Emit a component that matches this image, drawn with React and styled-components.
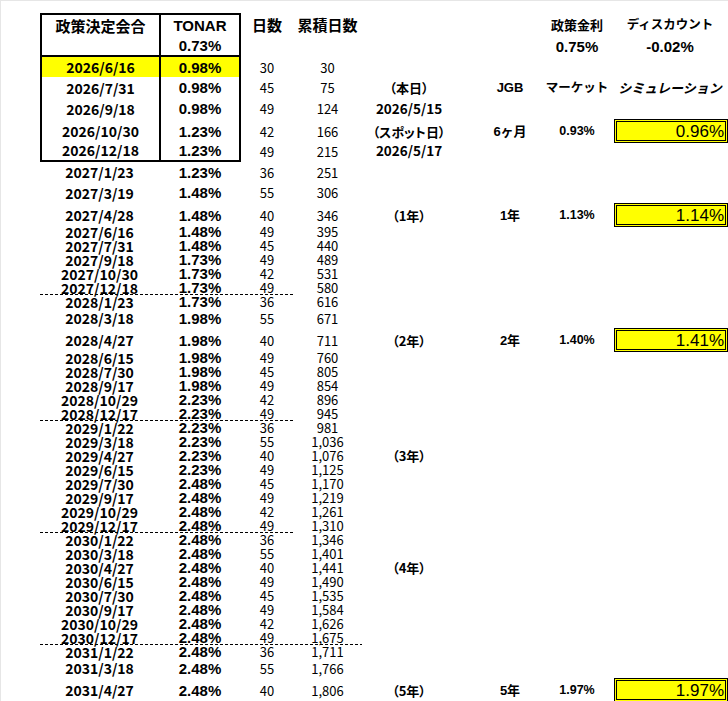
import React from "react";
import styled, { createGlobalStyle } from "styled-components";

const JP = `"Noto Sans CJK JP", "Noto Sans", sans-serif`;
const ARIAL = `"Liberation Sans", "Noto Sans CJK JP", Arial, sans-serif`;

// date, TONAR, days, cumulative, row height
const rows = [
  ["2026/6/16", "0.98%", "30", "30", 20],
  ["2026/7/31", "0.98%", "45", "75", 21],
  ["2026/9/18", "0.98%", "49", "124", 21],
  ["2026/10/30", "1.23%", "42", "166", 21],
  ["2026/12/18", "1.23%", "49", "215", 22],
  ["2027/1/23", "1.23%", "36", "251", 20],
  ["2027/3/19", "1.48%", "55", "306", 21],
  ["2027/4/28", "1.48%", "40", "346", 21],
  ["2027/6/16", "1.48%", "49", "395"],
  ["2027/7/31", "1.48%", "45", "440"],
  ["2027/9/18", "1.73%", "49", "489"],
  ["2027/10/30", "1.73%", "42", "531"],
  ["2027/12/18", "1.73%", "49", "580"],
  ["2028/1/23", "1.73%", "36", "616"],
  ["2028/3/18", "1.98%", "55", "671", 20],
  ["2028/4/27", "1.98%", "40", "711", 22],
  ["2028/6/15", "1.98%", "49", "760"],
  ["2028/7/30", "1.98%", "45", "805"],
  ["2028/9/17", "1.98%", "49", "854"],
  ["2028/10/29", "2.23%", "42", "896"],
  ["2028/12/17", "2.23%", "49", "945"],
  ["2029/1/22", "2.23%", "36", "981"],
  ["2029/3/18", "2.23%", "55", "1,036"],
  ["2029/4/27", "2.23%", "40", "1,076"],
  ["2029/6/15", "2.23%", "49", "1,125"],
  ["2029/7/30", "2.48%", "45", "1,170"],
  ["2029/9/17", "2.48%", "49", "1,219"],
  ["2029/10/29", "2.48%", "42", "1,261"],
  ["2029/12/17", "2.48%", "49", "1,310"],
  ["2030/1/22", "2.48%", "36", "1,346"],
  ["2030/3/18", "2.48%", "55", "1,401"],
  ["2030/4/27", "2.48%", "40", "1,441"],
  ["2030/6/15", "2.48%", "49", "1,490"],
  ["2030/7/30", "2.48%", "45", "1,535"],
  ["2030/9/17", "2.48%", "49", "1,584"],
  ["2030/10/29", "2.48%", "42", "1,626"],
  ["2030/12/17", "2.48%", "49", "1,675"],
  ["2031/1/22", "2.48%", "36", "1,711"],
  ["2031/3/18", "2.48%", "55", "1,766", 20],
  ["2031/4/27", "2.48%", "40", "1,806", 22],
];

// dashed separators (width of the line in px)
const dashes = {
  "2028/1/23": 253,
  "2029/1/22": 253,
  "2030/1/22": 253,
  "2031/1/22": 322,
};

const side = {
  "2026/7/31": { note: "（本日）", term: "JGB", market: "マーケット", sim: "シミュレーション" },
  "2026/9/18": { date: "2026/5/15" },
  "2026/10/30": { note: "（スポット日）", term: "6ヶ月", rate: "0.93%", box: "0.96%" },
  "2026/12/18": { date: "2026/5/17" },
  "2027/4/28": { note: "（1年）", term: "1年", rate: "1.13%", box: "1.14%" },
  "2028/4/27": { note: "（2年）", term: "2年", rate: "1.40%", box: "1.41%" },
  "2029/4/27": { note: "（3年）" },
  "2030/4/27": { note: "（4年）" },
  "2031/4/27": { note: "（5年）", term: "5年", rate: "1.97%", box: "1.97%" },
};

const BOXED = 5;

export default function App() {
  return (
    <>
      <GlobalStyle />
      <Page>
        <Row $h={22}>
          <Cell $left $top>
            <Head>政策決定会合</Head>
          </Cell>
          <Cell $left $right $top>
            <Rate>TONAR</Rate>
          </Cell>
          <Cell>
            <Head>日数</Head>
          </Cell>
          <Cell>
            <Head>累積日数</Head>
          </Cell>
          <Cell />
          <Cell />
          <Cell>
            <SmallHead>政策金利</SmallHead>
          </Cell>
          <Cell>
            <SmallHead $narrow>ディスカウント</SmallHead>
          </Cell>
        </Row>
        <Row $h={22}>
          <Cell $left $bottom />
          <Cell $left $right $bottom>
            <Rate>0.73%</Rate>
          </Cell>
          <Cell />
          <Cell />
          <Cell />
          <Cell />
          <Cell>
            <Rate>0.75%</Rate>
          </Cell>
          <Cell>
            <Rate>-0.02%</Rate>
          </Cell>
        </Row>
        {rows.map(([date, tonar, days, total, h], i) => {
          const boxed = i < BOXED;
          const last = i === BOXED - 1;
          const hl = i === 0;
          const s = side[date] || {};
          return (
            <Row key={date} $h={h || 14} $dash={dashes[date]}>
              <Cell $left={boxed} $bottom={last} $bg={hl}>
                <DateText>{date}</DateText>
              </Cell>
              <Cell $left={boxed} $right={boxed} $bottom={last} $bg={hl}>
                <Rate>{tonar}</Rate>
              </Cell>
              <Cell>
                <Count>{days}</Count>
              </Cell>
              <Cell>
                <Count>{total}</Count>
              </Cell>
              <NoteCell>
                {s.note && <Note>{s.note}</Note>}
                {s.date && <NoteDate>{s.date}</NoteDate>}
              </NoteCell>
              <Cell>{s.term && <Term>{s.term}</Term>}</Cell>
              <Cell>
                {s.market && <MarketHead>{s.market}</MarketHead>}
                {s.rate && <Market>{s.rate}</Market>}
              </Cell>
              <Cell>
                {s.sim && <SimHead>{s.sim}</SimHead>}
                {s.box && <SimBox>{s.box}</SimBox>}
              </Cell>
            </Row>
          );
        })}
      </Page>
    </>
  );
}

const GlobalStyle = createGlobalStyle`
  html, body {
    margin: 0;
    background: #fff;
  }
  body {
    font-family: ${JP};
    color: #000;
  }
`;

const Page = styled.div`
  width: 728px;
  height: 701px;
  box-sizing: border-box;
  overflow: hidden;
  padding: 12px 0 0 39px;
  border-top: 1px solid #e6e6e6;
  border-left: 1px solid #e6e6e6;
  display: flex;
  flex-direction: column;
`;

const Row = styled.div`
  display: grid;
  grid-template-columns: 119px 82px 52px 69px 116px 64px 70px 116px;
  height: ${(p) => p.$h}px;
  flex: none;
  background: ${(p) =>
    p.$dash
      ? `repeating-linear-gradient(90deg, #000 0 3px, transparent 3px 5px) 0 0 / ${p.$dash}px 1px no-repeat`
      : "none"};
`;

const Cell = styled.div`
  box-sizing: border-box;
  display: flex;
  align-items: center;
  justify-content: center;
  white-space: nowrap;
  background: ${(p) => (p.$bg ? "#ffff00" : "transparent")};
  border-left: ${(p) => (p.$left ? "2px solid #000" : "none")};
  border-right: ${(p) => (p.$right ? "2px solid #000" : "none")};
  border-top: ${(p) => (p.$top ? "2px solid #000" : "none")};
  border-bottom: ${(p) => (p.$bottom ? "2px solid #000" : "none")};
`;

const NoteCell = styled(Cell)`
  padding-right: 22px;
`;

const Head = styled.span`
  font-family: ${JP};
  font-weight: 700;
  font-size: 15px;
  line-height: 1;
`;

const SmallHead = styled.span`
  font-family: ${JP};
  font-weight: 700;
  font-size: ${(p) => (p.$narrow ? "12.5px" : "13px")};
  line-height: 1;
`;

const DateText = styled.span`
  font-family: ${JP};
  font-weight: 700;
  font-size: 14px;
  line-height: 1;
`;

const Rate = styled.span`
  font-family: ${ARIAL};
  font-weight: 700;
  font-size: 15px;
  line-height: 1;
`;

const Count = styled.span`
  font-family: ${JP};
  font-size: 13px;
  line-height: 1;
`;

const Note = styled.span`
  font-family: ${JP};
  font-weight: 700;
  font-size: 13px;
  line-height: 1;
  font-feature-settings: "palt";
`;

const NoteDate = styled.span`
  font-family: ${JP};
  font-weight: 700;
  font-size: 13.5px;
  line-height: 1;
`;

const Term = styled.span`
  font-family: ${ARIAL};
  font-weight: 700;
  font-size: 13px;
  line-height: 1;
`;

const MarketHead = styled.span`
  font-family: ${JP};
  font-weight: 700;
  font-size: 12.5px;
  line-height: 1;
`;

const Market = styled.span`
  font-family: ${ARIAL};
  font-weight: 700;
  font-size: 12.5px;
  line-height: 1;
`;

const SimHead = styled.span`
  font-family: ${JP};
  font-weight: 700;
  font-style: italic;
  font-size: 13px;
  line-height: 1;
`;

const SimBox = styled.div`
  flex: none;
  box-sizing: border-box;
  width: 114px;
  height: 24px;
  margin-left: 2px;
  border: 3px double #000;
  background: #ffff00;
  display: flex;
  align-items: center;
  justify-content: flex-end;
  padding-right: 1px;
  font-family: ${ARIAL};
  font-size: 17px;
  line-height: 1;
`;
